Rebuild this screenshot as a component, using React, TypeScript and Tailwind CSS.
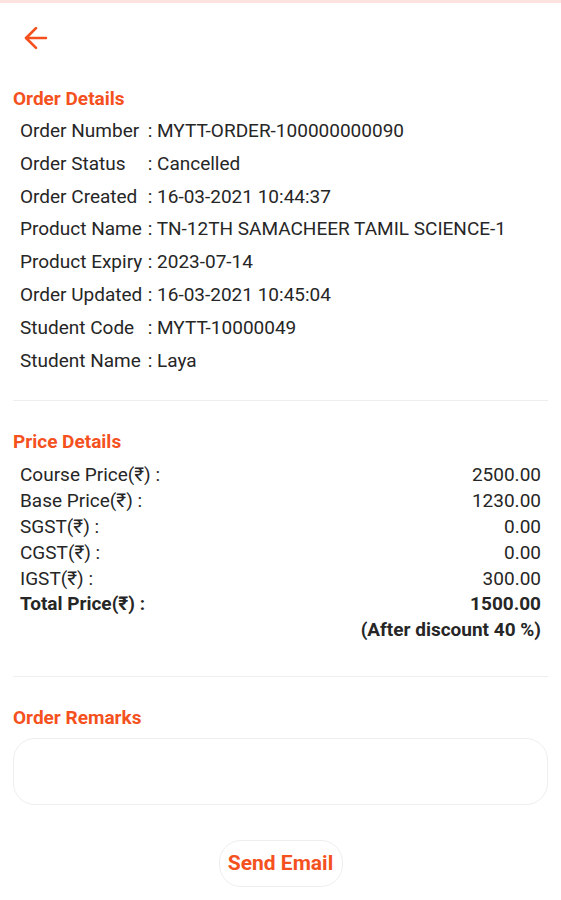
import React from "react";

const details: [string, string][] = [
  ["Order Number", "MYTT-ORDER-100000000090"],
  ["Order Status", "Cancelled"],
  ["Order Created", "16-03-2021 10:44:37"],
  ["Product Name", "TN-12TH SAMACHEER TAMIL SCIENCE-1"],
  ["Product Expiry", "2023-07-14"],
  ["Order Updated", "16-03-2021 10:45:04"],
  ["Student Code", "MYTT-10000049"],
  ["Student Name", "Laya"],
];

const prices: [string, string][] = [
  ["Course Price(₹) :", "2500.00"],
  ["Base Price(₹) :", "1230.00"],
  ["SGST(₹) :", "0.00"],
  ["CGST(₹) :", "0.00"],
  ["IGST(₹) :", "300.00"],
];

export default function App() {
  return (
    <div className="w-[561px] h-[900px] bg-white overflow-hidden text-[#262626] font-['Roboto','Liberation_Sans',sans-serif]">
      <div className="h-[3px] bg-[#fde3df]" />
      <div className="px-[13px]">
        <div className="h-[73px] flex items-start pt-[18px] pl-[6px]">
          <svg width="34" height="34" viewBox="0 0 24 24" fill="none" stroke="#f4511e" strokeWidth="1.9" strokeLinecap="round" strokeLinejoin="round">
            <path d="M19 12H5" />
            <path d="M12 19l-7-7 7-7" />
          </svg>
        </div>
        <div className="mt-[11px] text-[19px] leading-[24px] font-bold text-[#f4511e]">Order Details</div>
        <div className="mt-[4px] pl-[7px]">
          {details.map(([k, v]) => (
            <div key={k} className="flex text-[19px] leading-[32.8px]">
              <span className="min-w-[123px] whitespace-nowrap">{k}</span>
              <span className="whitespace-nowrap">&nbsp;: {v}</span>
            </div>
          ))}
        </div>
        <div className="mt-[23px] h-px bg-[#eeeeee]" />
        <div className="mt-[29px] text-[19px] leading-[24px] font-bold text-[#f4511e]">Price Details</div>
        <div className="mt-[8px] pl-[7px] pr-[7px]">
          {prices.map(([k, v]) => (
            <div key={k} className="flex justify-between text-[19px] leading-[25.8px]">
              <span>{k}</span>
              <span>{v}</span>
            </div>
          ))}
          <div className="flex justify-between text-[19px] leading-[25.8px] font-bold">
            <span>Total Price(₹) :</span>
            <span>1500.00</span>
          </div>
          <div className="flex justify-end text-[19px] leading-[25.8px] font-bold">
            <span>(After discount 40 %)</span>
          </div>
        </div>
        <div className="mt-[33px] h-px bg-[#eeeeee]" />
        <div className="mt-[29px] text-[19px] leading-[24px] font-bold text-[#f4511e]">Order Remarks</div>
        <div className="mt-[8px] h-[67px] rounded-[22px] border border-[#eeeeee]" />
        <div className="mt-[35px] flex justify-center">
          <div className="w-[124px] h-[47px] rounded-[22px] border border-[#eeeeee] flex items-center justify-center text-[21px] font-bold text-[#f4511e]">
            Send Email
          </div>
        </div>
      </div>
    </div>
  );
}
